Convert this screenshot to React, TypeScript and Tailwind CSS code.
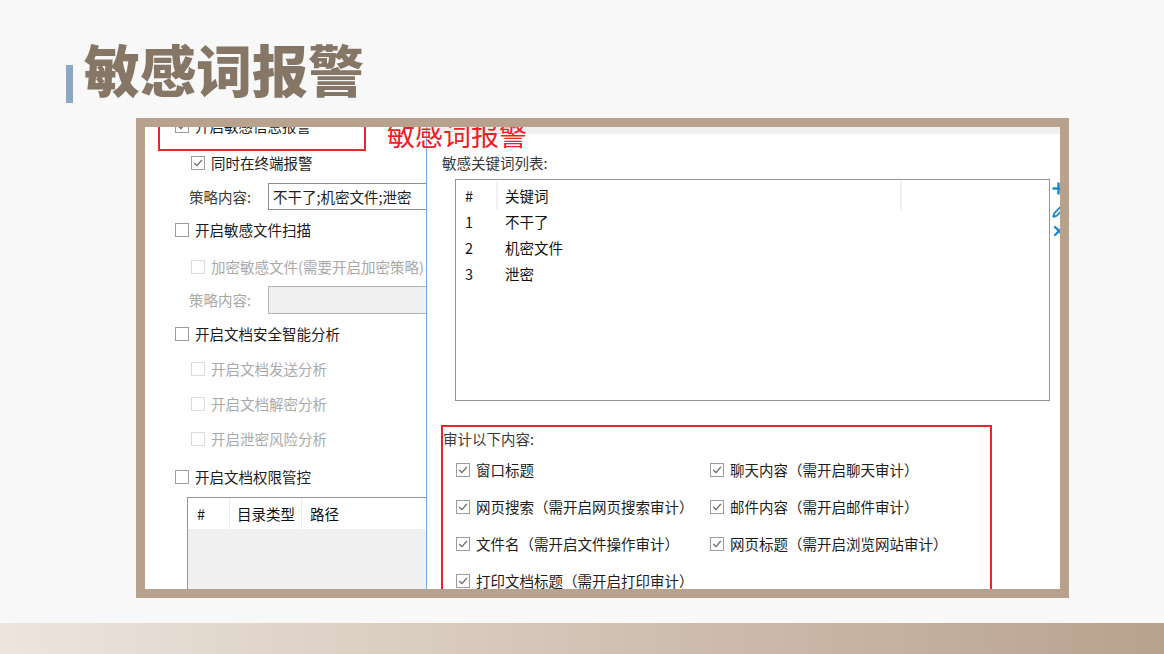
import React from 'react';
import { Plus, Pencil, X } from 'lucide-react';

const Box = ({ checked = false, disabled = false }: { checked?: boolean; disabled?: boolean }) => (
  <span
    className={`w-[14px] h-[14px] border bg-white flex items-center justify-center shrink-0 ${
      disabled ? 'border-[#dadada]' : 'border-[#9c9c9c]'
    }`}
  >
    {checked && (
      <svg width="10" height="10" viewBox="0 0 10 10">
        <path d="M1.3 5 L4 7.6 L8.9 1.8" fill="none" stroke="#666666" strokeWidth="1.3" />
      </svg>
    )}
  </span>
);

const Check = ({
  label,
  checked,
  disabled,
  className = '',
}: {
  label: string;
  checked?: boolean;
  disabled?: boolean;
  className?: string;
}) => (
  <div className={`h-[20px] shrink-0 flex items-center gap-[6px] whitespace-nowrap ${className}`}>
    <Box checked={checked} disabled={disabled} />
    <span className={disabled ? 'text-[#a9a9a9]' : 'text-[#1c1c1c]'}>{label}</span>
  </div>
);

export default function App() {
  const keywords = ['不干了', '机密文件', '泄密'];

  return (
    <div className="w-[1164px] h-[654px] bg-[#f8f8f8] flex flex-col overflow-hidden font-['Noto_Sans_CJK_SC','Liberation_Sans',sans-serif]">
      {/* Title */}
      <div className="h-[118px] shrink-0 flex items-end pb-[15px]">
        <div className="ml-[66px] w-[7px] h-[38px] bg-[#8fa6bf]" />
        <h1 className="ml-[11px] mb-[5px] text-[56px] leading-[60px] font-black text-[#857665]">
          敏感词报警
        </h1>
      </div>

      {/* Screenshot frame */}
      <div className="ml-[136px] w-[933px] h-[480px] shrink-0 bg-[#b8a28d] p-[9px]">
        <div className="relative w-full h-full bg-white overflow-hidden flex text-[14.5px] leading-[20px]">
          {/* Left panel */}
          <div className="w-[281px] shrink-0 flex flex-col pl-[30px] overflow-hidden">
            <Check label="开启敏感信息报警" checked className="-mt-[11px]" />
            <Check label="同时在终端报警" checked className="mt-[17px] ml-[16px]" />
            <div className="mt-[10px] ml-[14px] h-[27px] shrink-0 flex items-center">
              <span className="w-[79px] text-[#3c3c3c] whitespace-nowrap">策略内容:</span>
              <div className="flex-1 h-[27px] border border-[#8e8e8e] border-r-0 bg-white flex items-center pl-[4px] whitespace-nowrap text-[#1c1c1c]">
                不干了;机密文件;泄密
              </div>
            </div>
            <Check label="开启敏感文件扫描" className="mt-[10px]" />
            <Check label="加密敏感文件(需要开启加密策略)" disabled className="mt-[17px] ml-[16px]" />
            <div className="mt-[9px] ml-[14px] h-[28px] shrink-0 flex items-center">
              <span className="w-[79px] text-[#a9a9a9] whitespace-nowrap">策略内容:</span>
              <div className="flex-1 h-[28px] border border-[#b4b4b4] border-r-0 bg-[#f0f0f0]" />
            </div>
            <Check label="开启文档安全智能分析" className="mt-[10px]" />
            <Check label="开启文档发送分析" disabled className="mt-[15px] ml-[16px]" />
            <Check label="开启文档解密分析" disabled className="mt-[15px] ml-[16px]" />
            <Check label="开启泄密风险分析" disabled className="mt-[15px] ml-[16px]" />
            <Check label="开启文档权限管控" className="mt-[18px]" />
            <div className="mt-[10px] ml-[12px] flex-1 border border-[#8f939a] border-r-0 border-b-0 flex flex-col">
              <div className="h-[31px] shrink-0 bg-white flex items-center text-[#111]">
                <div className="w-[42px] pl-[9px] h-full flex items-center border-r border-[#ececec]">#</div>
                <div className="w-[72px] pl-[7px] h-full flex items-center border-r border-[#ececec] whitespace-nowrap">
                  目录类型
                </div>
                <div className="pl-[8px]">路径</div>
              </div>
              <div className="flex-1 bg-[#f0f0f0]" />
            </div>
          </div>

          {/* Divider */}
          <div className="w-[1px] shrink-0 bg-[#6eb0ea]" />

          {/* Right panel */}
          <div className="flex-1 min-w-0 flex flex-col overflow-hidden">
            <div className="h-[7px] shrink-0 bg-[#f0f0f0]" />
            <div className="mt-[19px] ml-[15px] h-[20px] shrink-0 text-[#3a3a3a]">敏感关键词列表:</div>
            <div className="mt-[6px] shrink-0 flex">
              <div className="ml-[28px] w-[595px] h-[222px] shrink-0 border border-[#8f939a] bg-white pt-[3px]">
                <div className="h-[26px] flex items-center text-[#111]">
                  <div className="w-[42px] pl-[9px] h-[28px] flex items-center border-r-2 border-[#f0f0f0]">#</div>
                  <div className="w-[404px] pl-[7px] h-[28px] flex items-center border-r-2 border-[#f0f0f0]">关键词</div>
                </div>
                {keywords.map((k, i) => (
                  <div key={k} className="h-[26px] flex items-center text-[#111]">
                    <div className="w-[42px] pl-[9px]">{i + 1}</div>
                    <div className="pl-[7px]">{k}</div>
                  </div>
                ))}
              </div>
              <div className="flex flex-col items-start text-[#1a8ad8] pt-[1px] shrink-0">
                <Plus size={17} strokeWidth={3.5} />
                <Pencil size={15} strokeWidth={3} className="mt-[6px] ml-[2px]" />
                <X size={16} strokeWidth={3.5} className="mt-[5px] ml-[1px]" />
              </div>
            </div>

            {/* Audit box */}
            <div className="mt-[24px] ml-[14px] w-[551px] h-[200px] border-2 border-[#e8242c] shrink-0">
              <div className="mt-[2px] text-[#3a3a3a] h-[20px]">审计以下内容:</div>
              <div className="mt-[11px] grid grid-cols-[254px_1fr] gap-y-[17px] pl-[13px]">
                <Check label="窗口标题" checked />
                <Check label="聊天内容（需开启聊天审计）" checked />
                <Check label="网页搜索（需开启网页搜索审计）" checked />
                <Check label="邮件内容（需开启邮件审计）" checked />
                <Check label="文件名（需开启文件操作审计）" checked />
                <Check label="网页标题（需开启浏览网站审计）" checked />
                <Check label="打印文档标题（需开启打印审计）" checked />
              </div>
            </div>
          </div>

          {/* Annotations */}
          <div className="absolute left-[13px] -top-[10px] w-[208px] h-[34px] border-2 border-[#e8242c]" />
          <div className="absolute left-[242px] -top-[8px] text-[28px] leading-[30px] text-[#ee1d26] whitespace-nowrap">
            敏感词报警
          </div>
        </div>
      </div>

      <div className="h-[25px] shrink-0" />
      <div className="flex-1 bg-gradient-to-r from-[#ede5de] to-[#b8a28e]" />
    </div>
  );
}
